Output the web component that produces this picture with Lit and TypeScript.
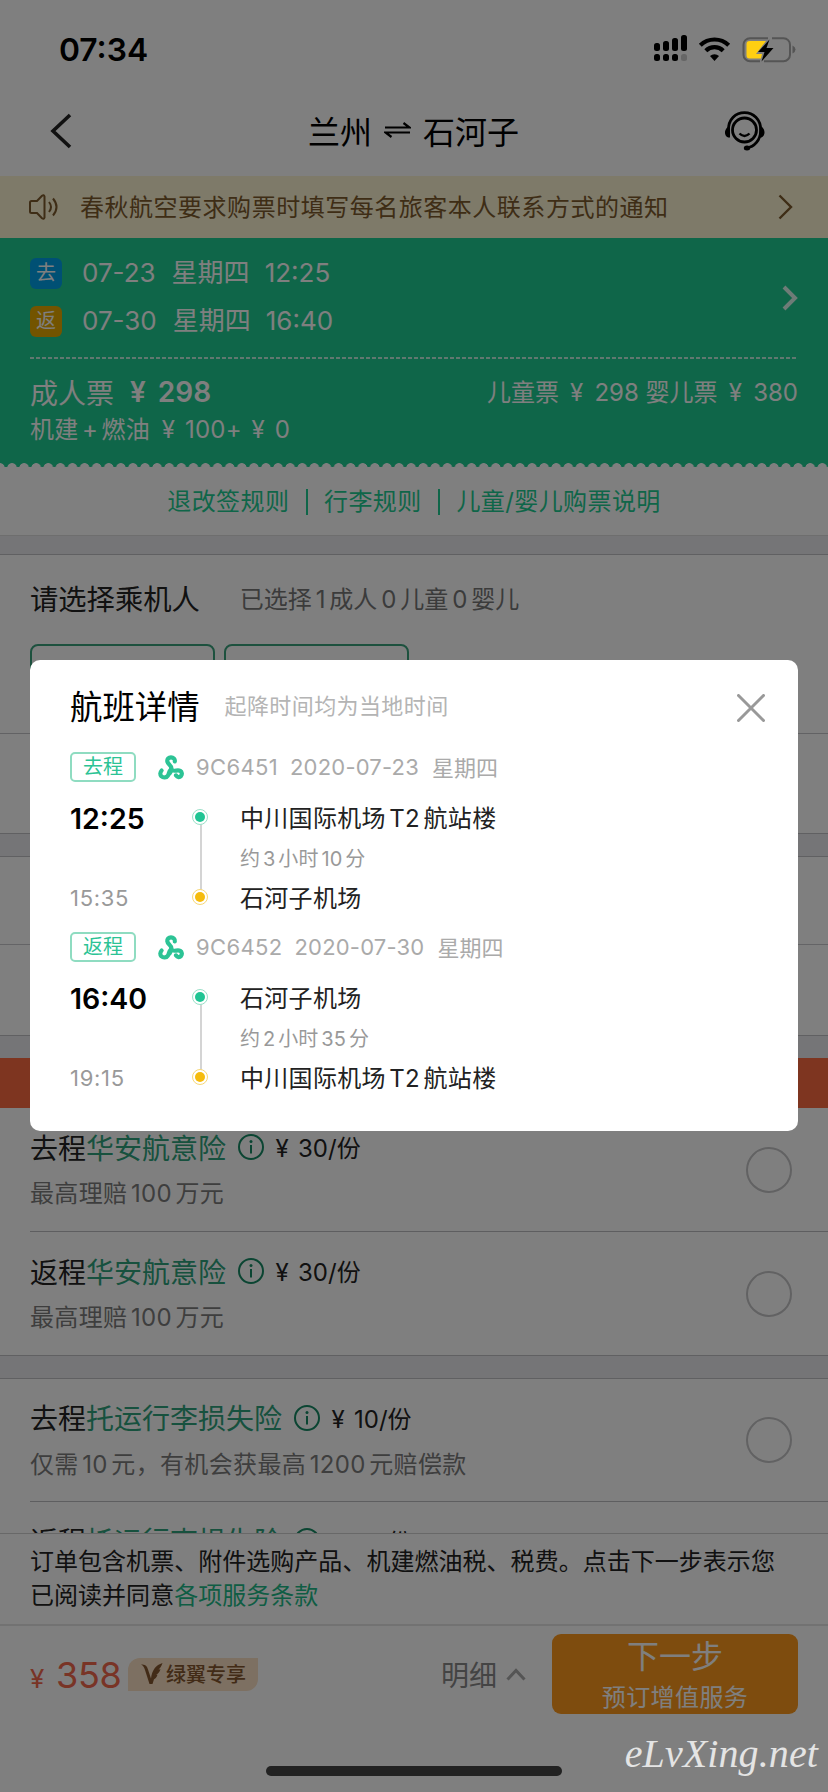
import { LitElement, html, css } from "lit";
import { customElement } from "lit/decorators.js";

/** Wraps Latin and digit runs so they get the spacing used between scripts. */
const mix = (s: string) =>
  s.split(/([0-9A-Za-z]+)/).map((p) => (/^[0-9A-Za-z]+$/.test(p) ? html`<span class="n">${p}</span>` : p));

const yen = html`<span class="y">¥</span>`;

const flights = [
  { tag: "去程", no: "9C6451", date: "2020-07-23", dep: "12:25", arr: "15:35", from: "中川国际机场T2航站楼", dur: "约3小时10分", to: "石河子机场" },
  { tag: "返程", no: "9C6452", date: "2020-07-30", dep: "16:40", arr: "19:15", from: "石河子机场", dur: "约2小时35分", to: "中川国际机场T2航站楼" },
];

const info = html`<svg class="info" viewBox="0 0 26 26" width="26" height="26">
  <circle cx="13" cy="13" r="12" fill="none" stroke="currentColor" stroke-width="2" />
  <circle cx="13" cy="7.6" r="1.5" fill="currentColor" />
  <path d="M13 11v8.6" stroke="currentColor" stroke-width="2" />
</svg>`;

const airline = html`<svg width="26" height="25" viewBox="0 0 26 25">
  <g fill="none" stroke="#2cc395" stroke-width="4.2" stroke-linecap="round">
    <path d="M16.8 6.4C17.2 3.8 15.3 2.4 13 2.4C10.5 2.4 9.1 4.1 9.3 6.2C9.6 9.3 13.3 9.8 13.4 13.4C13.5 15.6 12.6 17 11.7 18.4" />
    <path d="M3.6 15.6C1.9 17.4 1.9 20 3.4 21.3C5.2 23 8.3 22.9 9.8 20.7C11.2 18.6 10.7 16.4 12.6 14.7" />
    <path d="M18 20.4C19.3 22.5 21.7 22.5 23 21C24.4 19.3 24 17 22.2 15.9C19.4 14.4 17.5 16.6 14.6 15.4" />
  </g>
</svg>`;

@customElement("app-root")
export class AppRoot extends LitElement {
  static styles = css`
    :host { display: block; width: 828px; height: 1792px; overflow: hidden; position: relative; background: #fff;
      font-family: Inter, "Noto Sans CJK SC", sans-serif; font-size: 24px; color: #222; }
    * { box-sizing: border-box; }
    svg { display: block; flex: none; }
    .row { display: flex; align-items: center; white-space: nowrap; }
    .n { margin: 0 3.5px; }
    .y { display: inline-block; width: .92em; text-align: center; }
    .page { height: 1792px; display: flex; flex-direction: column; }
    .scroll { height: 1445px; flex: none; overflow: hidden; display: flex; flex-direction: column; }
    .status { height: 88px; padding: 10px 32px 0 59px; justify-content: space-between; position: relative; z-index: 3; color: #000; font-size: 31.8px; font-weight: 600; flex: none; }
    .nav { height: 88px; padding: 0 63px 2px 50px; justify-content: space-between; font-size: 32px; color: #000; flex: none; }
    .title { display: flex; align-items: center; gap: 12px; margin: -2px 0 0 28px; }
    .notice { height: 62px; background: #fcf4d2; color: #7d5a2c; padding: 0 35px 0 29px; flex: none; }
    .notice .msg { margin: -3px 0 0 20px; flex: 1; letter-spacing: .52px; }
    .trip { background: #1ecc92; height: 225px; padding: 20px 30px 0 30px; color: #fff; flex: none; }
    .legs { display: flex; justify-content: space-between; }
    .legs > svg { margin: 27px -1px 0 0; }
    .leg { height: 30px; font-size: 26px; margin-bottom: 18px; line-height: 30px; }
    .leg i { font-style: normal; width: 32px; height: 31px; border-radius: 6px; font-size: 20px; line-height: 31px; text-align: center; background: #00a0e9; margin-right: 20px; }
    .leg i.back { background: #e6a800; }
    .leg .wk { margin: 0 15px 0 16px; }
    .dash { height: 2px; margin: 3px 0 13px; background: repeating-linear-gradient(90deg, #ffffffb8 0 4px, transparent 4px 6px); }
    .fare { height: 38px; justify-content: space-between; }
    .fare .adult { font-size: 28px; padding-top: 2px; }
    .fare b { font-weight: 600; font-size: 28px; margin-left: 11px; }
    .fare .kids { margin-top: -2px; }
    .tax { height: 34px; letter-spacing: .2px; }
    .tax .y { width: .8em; }
    .tax .levy { margin-left: 9px; }
    .scallop { height: 4px; background: radial-gradient(circle at 6px 5px, #fff 4.5px, #1ecc92 5.2px) 6px 0 / 12.1px 4px; flex: none; }
    .rules { height: 68px; padding-top: 1px; justify-content: center; color: #1ecc92; flex: none; letter-spacing: .4px; }
    .rules span { padding: 0 16.4px; line-height: 26px; }
    .rules span + span { border-left: 2px solid #1ecc92; }
    .band { height: 20px; background: #eaeaef; border-top: 1px solid #ddd; border-bottom: 1px solid #c0c0c4; flex: none; }
    .pax { height: 179px; padding: 24px 30px 0; border-bottom: 1px solid #c4c4c8; flex: none; }
    .pax .head { height: 37px; font-size: 28.3px; }
    .pax .sub { font-size: 24px; color: #777; margin-left: 40px; }
    .pax .n { margin: 0 3.9px; }
    .chips { display: flex; gap: 9px; margin-top: 28px; }
    .chip { width: 185px; height: 60px; border: 2px solid #3aa27d; border-radius: 8px; }
    .blank { flex: none; }
    .b1 { height: 99px; }
    .b2 { height: 88px; border-bottom: 1px solid #c8c8cc; }
    .b3 { height: 90px; }
    .gap { background: #eaeaef; border-top: 1px solid #c0c0c4; border-bottom: 1px solid #c0c0c4; height: 24px; flex: none; }
    .gap.slim { height: 23px; border-bottom: 0; }
    .promo { height: 50px; background: #fc6a40; flex: none; }
    .ins { height: 124px; margin-left: 30px; padding-right: 36px; border-bottom: 1.5px solid #bcbcc0; justify-content: space-between; flex: none; }
    .ins.last { border-bottom: 0; height: 123px; }
    .ins.third { height: 123px; }
    .ins.peek { padding-top: 19px; }
    .ins .texts { margin-top: -3px; }
    .ins .name { height: 38px; font-size: 28px; }
    .ins .name em { font-style: normal; color: #2fa37d; margin-right: 12px; }
    .info { color: #168a65; margin: 1px 9px 0 0; }
    .ins .price { font-size: 24px; }
    .price .y { width: .76em; }
    .ins .desc { height: 34px; margin-top: 9px; color: #7d7d7d; letter-spacing: .35px; }
    .radio { width: 46px; height: 46px; border-radius: 50%; border: 2px solid #c4c4c6; }
    .footer { height: 259px; flex: none; border-top: 1px solid #d0d0d0; }
    .terms { height: 92px; padding: 11px 30px 0; line-height: 34.4px; border-bottom: 2px solid #e4e4e4; }
    .terms div { white-space: nowrap; letter-spacing: .03px; }
    .terms a { color: #1ebb88; }
    .pay { height: 96px; padding: 0 30px; }
    .sum { color: #f2684c; font-size: 36px; width: 98px; letter-spacing: -.3px; white-space: nowrap; padding-top: 2px; }
    .sum small { font-size: 26px; margin-right: 12px; }
    .vip { width: 130px; height: 33px; background: #fae0c4; border-radius: 12px 0 12px 0; color: #85572e; font-size: 20px; font-weight: 500; padding: 0 0 1px 13px; gap: 3px; }
    .detail { margin-left: 183px; font-size: 28px; color: #888; gap: 9px; width: 111px; }
    .next { width: 246px; height: 80px; border-radius: 9px; background: #fc981c; color: #fff; display: flex; flex-direction: column; align-items: center; }
    .next strong { font-weight: 400; font-size: 32px; line-height: 46px; }
    .next span { line-height: 36px; letter-spacing: .4px; }
    .mask { position: absolute; inset: 0; background: rgba(0, 0, 0, .5); z-index: 2; }
    .home { position: absolute; left: 266px; top: 1766px; width: 296px; height: 10px; border-radius: 5px; background: #222; z-index: 4; }
    .brand { position: absolute; right: 10px; top: 1731px; z-index: 4; color: #e4e4e4; font: italic 40px/46px "Liberation Serif", serif; letter-spacing: .1px; }
    .modal { position: absolute; left: 30px; top: 660px; width: 768px; height: 471px; border-radius: 10px; background: #fff; z-index: 4; padding: 24px 33px 0 40px; }
    .mhead { height: 40px; font-size: 32.4px; color: #000; }
    .mhead svg { margin-top: 8px; }
    .mhead small { font-size: 22px; letter-spacing: .4px; color: #b4b4b4; margin-left: 25px; flex: 1; }
    .flight { height: 180px; padding-top: 28px; }
    .fl { height: 30px; color: #aaa; font-size: 22px; }
    .tag { width: 66px; height: 30px; border: 2px solid #8fdcc1; border-radius: 5px; color: #2cc395; font-size: 20px; line-height: 27px; text-align: center; margin-right: 22px; }
    .fl .no { margin-left: 12px; letter-spacing: .35px; }
    .fl .dt { margin: 0 13px 0 12px; letter-spacing: .2px; }
    .fl .dw { margin-top: -3px; }
    .body { display: flex; margin-top: 16px; }
    .times { width: 120px; height: 120px; display: flex; flex-direction: column; justify-content: space-between; }
    .times b { font-size: 28.5px; font-weight: 600; color: #000; line-height: 41px; }
    .times span { font-size: 22px; letter-spacing: .7px; color: #999; line-height: 39px; }
    .places { margin: 1px 0 0 30px; }
    .places div { height: 40px; line-height: 40px; white-space: nowrap; letter-spacing: .3px; }
    .places .dur { font-size: 20px; color: #999; letter-spacing: .1px; }
    .dur .n { margin: 0 2.9px; }
  `;

  private title(name: string, kind: string, price: string) {
    return html`<div class="row name">${name}<em>${kind}</em>${info}<span class="price">${yen} ${price}/份</span></div>`;
  }

  private ins(name: string, kind: string, price: string, desc: string, cls = "") {
    return html`<div class="row ins ${cls}">
      <div class="texts">
        ${this.title(name, kind, price)}
        <div class="row desc"><span>${mix(desc)}</span></div>
      </div>
      <div class="radio"></div>
    </div>`;
  }

  render() {
    return html`
      <div class="page">
       <div class="row status">
          <span>07:34</span>
          <svg width="142" height="32" viewBox="0 0 142 32">
            <g fill="#000">
              <rect x="0" y="10" width="6" height="8" rx="2.5" /><rect x="9" y="8" width="6" height="10" rx="2.5" />
              <rect x="18" y="5" width="6" height="13" rx="2.5" /><rect x="27" y="2" width="6" height="16" rx="2.5" />
              <rect x="0" y="21" width="6" height="7" rx="2.5" /><rect x="9" y="21" width="6" height="7" rx="2.5" />
              <rect x="18" y="21" width="6" height="7" rx="2.5" /><rect x="27" y="21" width="6" height="7" rx="2.5" fill="#666" />
            </g>
            <g fill="none" stroke="#000" stroke-width="4.2">
              <path d="M46.3 12.2a20.5 20.5 0 0 1 28.4 0" /><path d="M51.8 17.7a12.5 12.5 0 0 1 17.4 0" />
            </g>
            <path d="M56 23a6.8 6.8 0 0 1 9 0l-4.5 5z" fill="#000" />
            <path d="M114 5.2H96a6.5 6.5 0 0 0-6.5 6.5v10a6.5 6.5 0 0 0 6.5 6.5H106M118 5.2h11.5a6.5 6.5 0 0 1 6.5 6.5v10a6.5 6.5 0 0 1-6.5 6.5H110" fill="none" stroke="#555" stroke-width="2" />
            <path d="M112 8H95.5a3 3 0 0 0-3 3v11.5a3 3 0 0 0 3 3H107l1-4.5h-6z" fill="#ffcf12" />
            <path d="M115.5 6.5L104 19h6.5l-3 9.5L119.5 15h-7z" fill="#000" />
            <path d="M138.5 12.5q3 1.5 3 4t-3 4z" fill="#555" />
          </svg>
       </div>
       <div class="scroll">
        <div class="row nav">
          <svg width="24" height="36" viewBox="0 0 24 36"><path d="M20 2L3 18l17 16" fill="none" stroke="#222" stroke-width="3.6" /></svg>
          <div class="title">
            <span>兰州</span>
            <svg width="27" height="16" viewBox="0 0 27 16"><path d="M1 5.5h24.5l-6-4.5M26 10.5H1.500l6 4.500" fill="none" stroke="#000" stroke-width="2.200" /></svg>
            <span>石河子</span>
          </div>
          <svg width="40" height="40" viewBox="0 0 40 40">
            <g fill="none" stroke="#000" stroke-width="2.8">
              <circle cx="19.5" cy="19" r="12" />
              <path d="M3.5 19.5C3 8 11 1.6 19.5 1.6S36 8 35.7 19.5C35.5 29 29.5 36 21.5 37" />
              <path d="M14.5 22.5q5 5 10 0" stroke-width="2.4" />
            </g>
            <path d="M5 15v11.5C1.5 27 0 24 0 21.5S2 15.5 5 15zM34.5 15v11.5c3.5 .5 5-2.5 5-5s-1.500-6-5-6.500z" />
            <ellipse cx="22" cy="37" rx="3.2" ry="2.5" />
          </svg>
        </div>
        <div class="row notice">
          <svg width="31" height="26" viewBox="0 0 31 26"><g fill="none" stroke="#7d5a2c" stroke-width="2">
            <path d="M2.5 7h5.500L13 1.800q2-1.500 2.500 .7v21q-.5 2.200-2.500 .7L8 19H2.500Q1 19 1 17.500v-9Q1 7 2.500 7z" /><path d="M20 8q4 5 0 10M24 4.500q7 8.500 0 17" /></g></svg>
          <span class="msg">春秋航空要求购票时填写每名旅客本人联系方式的通知</span>
          <svg width="15" height="26" viewBox="0 0 15 26"><path d="M1.500 1.500L13 13 1.500 24.500" fill="none" stroke="#7d5a2c" stroke-width="2.400" /></svg>
        </div>
        <div class="trip">
          <div class="legs">
            <div>
              <div class="row leg"><i>去</i><span>07-23</span><span class="wk">星期四</span><span>12:25</span></div>
              <div class="row leg"><i class="back">返</i><span>07-30</span><span class="wk">星期四</span><span>16:40</span></div>
            </div>
            <svg width="17" height="26" viewBox="0 0 17 26"><path d="M2 2l11 11L2 24" fill="none" stroke="#fff" stroke-opacity=".85" stroke-width="4" /></svg>
          </div>
          <div class="dash"></div>
          <div class="row fare"><span class="row adult">成人票<b>${yen} 298</b></span><span class="kids">儿童票 ${yen} 298 婴儿票 ${yen} 380</span></div>
          <div class="row tax"><span>机建<span class="n">+</span>燃油<span class="levy">${yen} 100+ ${yen} 0</span></span></div>
        </div>
        <div class="scallop"></div>
        <div class="row rules"><span>退改签规则</span><span>行李规则</span><span>儿童/婴儿购票说明</span></div>
        <div class="band"></div>
        <div class="pax">
          <div class="row head">请选择乘机人<span class="sub">${mix("已选择1成人0儿童0婴儿")}</span></div>
          <div class="chips"><div class="chip"></div><div class="chip"></div></div>
        </div>
        <div class="blank b1"></div>
        <div class="gap"></div>
        <div class="blank b2"></div>
        <div class="blank b3"></div>
        <div class="gap slim"></div>
        <div class="promo"></div>
        ${this.ins("去程", "华安航意险", "30", "最高理赔100万元")}
        ${this.ins("返程", "华安航意险", "30", "最高理赔100万元", "last")}
        <div class="gap"></div>
        ${this.ins("去程", "托运行李损失险", "10", "仅需10元，有机会获最高1200元赔偿款", "third")}
        <div class="ins peek">${this.title("返程", "托运行李损失险", "10")}</div>
       </div>
       <div class="footer">
        <div class="terms">
          <div>订单包含机票、附件选购产品、机建燃油税、税费。点击下一步表示您</div>
          <div>已阅读并同意<a>各项服务条款</a></div>
        </div>
        <div class="row pay">
          <div class="sum"><small>¥</small>358</div>
          <div class="row vip">
            <svg width="22" height="22" viewBox="0 0 22 22"><path d="M0 1.500c4 0 6 1 7 5l3 9C11 7 15 2 21.500 0c-1 3-2 5-4 6.500l2-.3c-1 3-2.500 4.500-4.500 5.500l1.500 0c-1 3-2.500 4-3.500 4.500L11.500 21H8.500L4 7C3 4 2 2.500 0 1.500z" fill="#85572e" /></svg>绿翼专享
          </div>
          <div class="row detail">明细<svg width="20" height="13" viewBox="0 0 20 13"><path d="M1.500 11.500L10 2.500l8.500 9" fill="none" stroke="#aaa" stroke-width="3" /></svg></div>
          <div class="next"><strong>下一步</strong><span>预订增值服务</span></div>
        </div>
       </div>
      </div>

      <div class="mask"></div>
      <div class="modal">
        <div class="row mhead">航班详情<small>起降时间均为当地时间</small>
          <svg width="28" height="28" viewBox="0 0 28 28"><path d="M1.500 1.500l25 25M26.500 1.500l-25 25" stroke="#999" stroke-width="3" stroke-linecap="round" /></svg>
        </div>
        ${flights.map((f) => html`<div class="flight">
          <div class="row fl"><span class="tag">${f.tag}</span>${airline}<span class="no">${f.no}</span><span class="dt">${f.date}</span><span class="dw">星期四</span></div>
          <div class="body">
            <div class="times"><b>${f.dep}</b><span>${f.arr}</span></div>
            <svg width="20" height="120" viewBox="0 0 20 120">
              <path d="M11 24v68" stroke="#d4d4d4" stroke-width="2" />
              <circle cx="10" cy="19" r="7.500" fill="#fff" stroke="#9be0c8" stroke-width="1" /><circle cx="10" cy="19" r="5" fill="#20c493" />
              <circle cx="10" cy="99" r="7.500" fill="#fff" stroke="#f7d877" stroke-width="1" /><circle cx="10" cy="99" r="5" fill="#f5bb0c" />
            </svg>
            <div class="places"><div>${mix(f.from)}</div><div class="dur">${mix(f.dur)}</div><div>${mix(f.to)}</div></div>
          </div>
        </div>`)}
      </div>
      <div class="home"></div>
      <div class="brand">eLvXing.net</div>
    `;
  }
}
